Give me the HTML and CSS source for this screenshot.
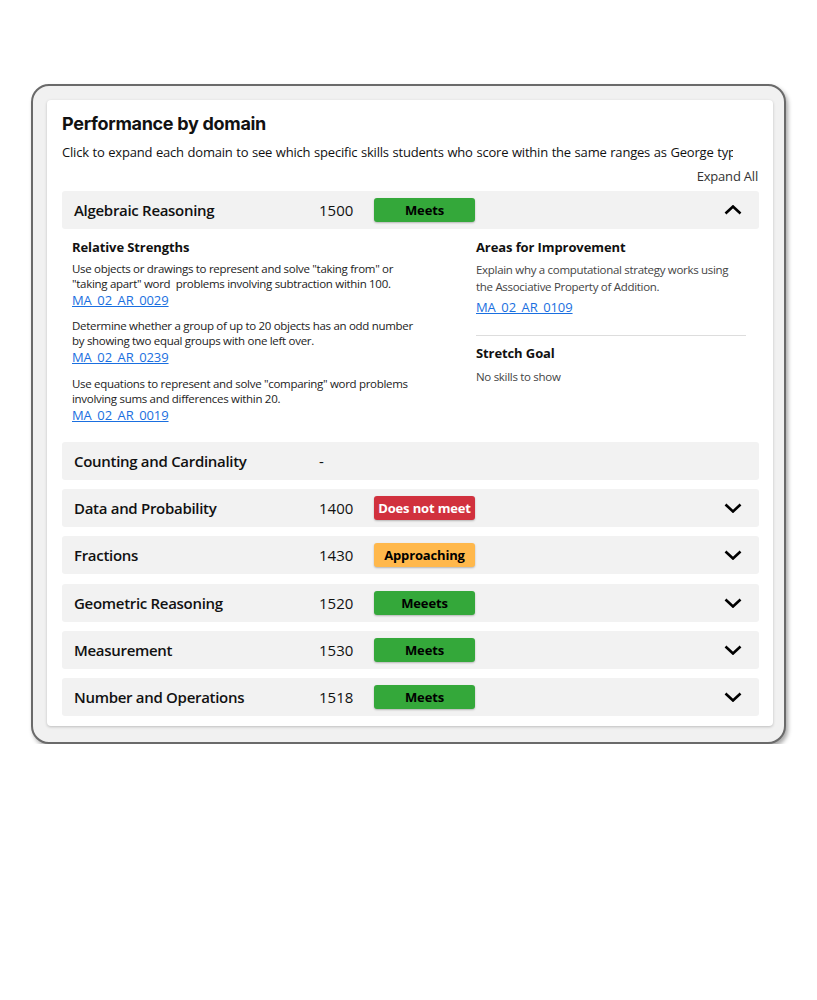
FILE: index.html
```html
<!DOCTYPE html>
<html>
<head>
<meta charset="utf-8">
<link rel="stylesheet" href="styles.css">
</head>
<body>
<div class="frame">
  <div class="panel">
    <h1 class="title">Performance by domain</h1>
    <p class="subtitle">Click to expand each domain to see which specific skills students who score within the same ranges as George typically know</p>
    <div class="expand-all">Expand All</div>

    <div class="row">
      <span class="name">Algebraic Reasoning</span>
      <span class="score">1500</span>
      <span class="badge green">Meets</span>
      <svg class="chev" width="18" height="10" viewBox="0 0 18 10"><polyline points="1.5,8.5 9,1.5 16.5,8.5" fill="none" stroke="#000" stroke-width="2.6"/></svg>
    </div>
    <div class="details">
      <div class="col-left">
        <h3 class="sub">Relative Strengths</h3>
        <p class="skill">Use objects or drawings to represent and solve "taking from" or<br>"taking apart" word&nbsp; problems involving subtraction within 100.</p>
        <a class="code" href="#">MA_02_AR_0029</a>
        <p class="skill">Determine whether a group of up to 20 objects has an odd number<br>by showing two equal groups with one left over.</p>
        <a class="code" href="#">MA_02_AR_0239</a>
        <p class="skill">Use equations to represent and solve "comparing" word problems<br>involving sums and differences within 20.</p>
        <a class="code" href="#">MA_02_AR_0019</a>
      </div>
      <div class="col-right">
        <h3 class="sub">Areas for Improvement</h3>
        <p class="skill alt">Explain why a computational strategy works using<br>the Associative Property of Addition.</p>
        <a class="code alt-code" href="#">MA_02_AR_0109</a>
        <hr class="divider">
        <h3 class="sub">Stretch Goal</h3>
        <p class="skill alt none">No skills to show</p>
      </div>
    </div>

    <div class="row first-collapsed">
      <span class="name">Counting and Cardinality</span>
      <span class="score">-</span>
    </div>
    <div class="row">
      <span class="name">Data and Probability</span>
      <span class="score">1400</span>
      <span class="badge red">Does not meet</span>
      <svg class="chev" width="18" height="10" viewBox="0 0 18 10"><polyline points="1.5,1.5 9,8.5 16.5,1.5" fill="none" stroke="#000" stroke-width="2.6"/></svg>
    </div>
    <div class="row">
      <span class="name">Fractions</span>
      <span class="score">1430</span>
      <span class="badge orange">Approaching</span>
      <svg class="chev" width="18" height="10" viewBox="0 0 18 10"><polyline points="1.5,1.5 9,8.5 16.5,1.5" fill="none" stroke="#000" stroke-width="2.6"/></svg>
    </div>
    <div class="row">
      <span class="name">Geometric Reasoning</span>
      <span class="score">1520</span>
      <span class="badge green">Meeets</span>
      <svg class="chev" width="18" height="10" viewBox="0 0 18 10"><polyline points="1.5,1.5 9,8.5 16.5,1.5" fill="none" stroke="#000" stroke-width="2.6"/></svg>
    </div>
    <div class="row">
      <span class="name">Measurement</span>
      <span class="score">1530</span>
      <span class="badge green">Meets</span>
      <svg class="chev" width="18" height="10" viewBox="0 0 18 10"><polyline points="1.5,1.5 9,8.5 16.5,1.5" fill="none" stroke="#000" stroke-width="2.6"/></svg>
    </div>
    <div class="row">
      <span class="name">Number and Operations</span>
      <span class="score">1518</span>
      <span class="badge green">Meets</span>
      <svg class="chev" width="18" height="10" viewBox="0 0 18 10"><polyline points="1.5,1.5 9,8.5 16.5,1.5" fill="none" stroke="#000" stroke-width="2.6"/></svg>
    </div>
  </div>
</div>
</body>
</html>
```

FILE: styles.css
```css
* { box-sizing: border-box; }
body {
  margin: 0;
  background: #fff;
  font-family: "Open Sans", "Liberation Sans", sans-serif;
  color: #111;
}
.frame {
  margin: 84px 0 0 31px;
  width: 755px;
  height: 660px;
  border: 2px solid #6a6a6a;
  border-radius: 18px;
  background: #f1f1f1;
  box-shadow: 2px 3px 4px rgba(0,0,0,0.35);
  padding: 14px 11px 0 14px;
}
.panel {
  background: #fff;
  border-radius: 4px;
  box-shadow: 0 1px 3px rgba(0,0,0,0.22);
  padding: 13px 14px 8px 15px;
  height: 626px;
  overflow: hidden;
}
.title {
  margin: 0;
  font-family: "Inter", "Open Sans", sans-serif;
  font-weight: 700;
  font-size: 18px;
  line-height: 22px;
  color: #111;
  letter-spacing: -0.3px;
}
.subtitle {
  margin: 7px 0 0 0;
  width: 671px;
  white-space: nowrap;
  overflow: hidden;
  font-size: 13px;
  letter-spacing: -0.2px;
  word-spacing: 0.5px;
  line-height: 20px;
  color: #111;
}
.expand-all {
  text-align: right;
  font-size: 13px;
  letter-spacing: -0.2px;
  line-height: 20px;
  margin-top: 4px;
  padding-right: 1px;
  color: #333;
}
.row {
  display: flex;
  align-items: center;
  height: 38px;
  background: #f2f2f2;
  border-radius: 3px;
  padding-left: 12px;
  margin-top: 9.4px;
}
.expand-all + .row { margin-top: 5px; }
.first-collapsed { margin-top: 0; }
.name {
  width: 245px;
  font-size: 15px;
  font-weight: 600;
  letter-spacing: -0.3px;
  color: #111;
}
.score {
  width: 55px;
  font-size: 15px;
  color: #111;
}
.badge {
  width: 101px;
  height: 24px;
  border-radius: 3px;
  display: flex;
  align-items: center;
  justify-content: center;
  font-size: 13px;
  font-weight: 700;
  letter-spacing: -0.15px;
  box-shadow: 0 1px 2px rgba(0,0,0,0.25);
}
.green { background: #34a83a; color: #000; }
.red { background: #d1313e; color: #fff; }
.orange { background: #ffb84c; color: #000; }
.chev { margin-left: auto; margin-right: 17px; }
.details {
  display: flex;
  padding: 9px 0 18px 10px;
}
.col-left { width: 404px; }
.col-right { width: 270px; }
.sub {
  margin: 0;
  font-size: 13px;
  line-height: 18px;
  font-weight: 700;
  letter-spacing: -0.1px;
  color: #111;
}
.skill {
  margin: 4.5px 0 0 0;
  white-space: nowrap;
  font-size: 11.5px;
  letter-spacing: -0.3px;
  line-height: 15px;
  color: #222;
}
.col-left .skill + .code + .skill { margin-top: 9.5px; }
.code {
  display: block;
  font-size: 13px;
  line-height: 18px;
  letter-spacing: -0.1px;
  color: #1a6fe0;
  text-decoration: underline;
  width: max-content;
}
.alt {
  font-size: 11.5px;
  letter-spacing: -0.3px;
  line-height: 17px;
  color: #444;
}
.alt-code { margin-top: 3.5px; }
.divider {
  border: 0;
  border-top: 1px solid #ddd;
  margin: 19px 0 8px 0;
}
.none { margin-top: 6px; }
```
